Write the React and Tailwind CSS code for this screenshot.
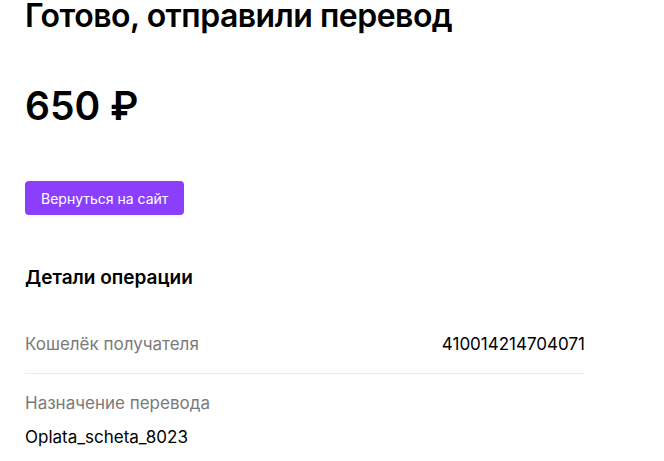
import React from 'react';

function DetailRow({ label, value }) {
  return (
    <div className="flex items-center justify-between h-[58px] border-b border-[#ebebeb]">
      <span className="text-[17px] text-[#7a7a7a]">{label}</span>
      <span className="text-[17px] text-black">{value}</span>
    </div>
  );
}

export default function App() {
  return (
    <div className="bg-white min-h-screen font-['Inter',sans-serif] text-black">
      <div className="w-[560px] ml-[25px]">
        <h1 className="pt-[1px] text-[32px] leading-[30px] font-semibold tracking-[-0.5px]">
          Готово, отправили перевод
        </h1>

        <div className="mt-[51px] text-[39px] leading-[48px] font-semibold">650 ₽</div>

        <button className="mt-[51px] h-[34px] px-[16px] rounded-[4px] bg-[#8b3ffd] text-white text-[14px]">
          Вернуться на сайт
        </button>

        <h2 className="mt-[51px] text-[19px] leading-[24px] font-semibold">Детали операции</h2>

        <div className="mt-[26px]">
          <DetailRow label="Кошелёк получателя" value="410014214704071" />
          <div className="pt-[17px]">
            <div className="text-[17px] leading-[24px] text-[#7a7a7a]">Назначение перевода</div>
            <div className="mt-[10px] text-[17px] leading-[24px]">Oplata_scheta_8023</div>
          </div>
        </div>
      </div>
    </div>
  );
}
